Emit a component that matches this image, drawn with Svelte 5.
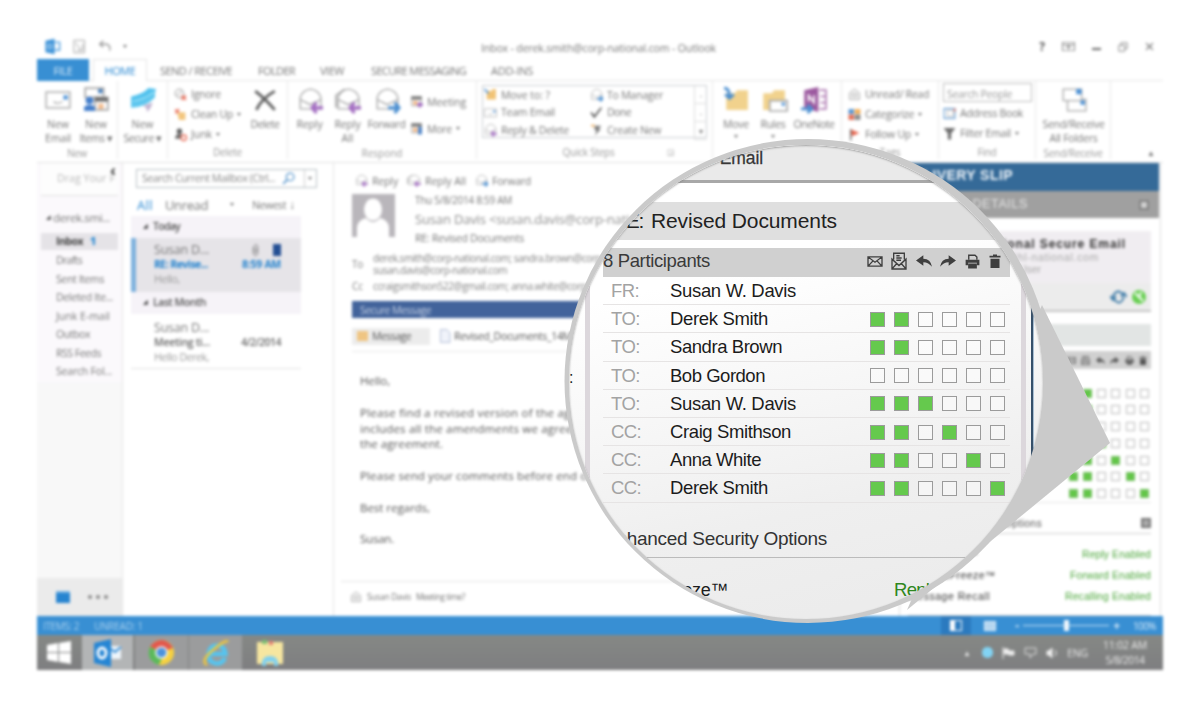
<script>
  const tabs = [
    ['SEND / RECEIVE', 72, 14],
    ['FOLDER', 37, 26],
    ['VIEW', 24, 25],
    ['SECURE MESSAGING', 95, 27],
    ['ADD-INS', 42, 25]
  ];
  const folders = [
    ['Drafts', 26], ['Sent Items', 48], ['Deleted Ite...', 57], ['Junk E-mail', 54],
    ['Outbox', 34], ['RSS Feeds', 45], ['Search Fol...', 56]
  ];
  const body = [
    ['Hello,', 30], ['', 0],
    ['Please find a revised version of the agreement', 258],
    ['includes all the amendments we agreed on', 237],
    ['the agreement.', 83], ['', 0],
    ['Please send your comments before end of day', 254], ['', 0],
    ['Best regards,', 70], ['', 0], ['Susan.', 34]
  ];
  const people = [
    ['FR:', 28, 'Susan W. Davis', 126, null],
    ['TO:', 29, 'Derek Smith', 98, '110000'],
    ['TO:', 29, 'Sandra Brown', 112, '110000'],
    ['TO:', 29, 'Bob Gordon', 95, '000000'],
    ['TO:', 29, 'Susan W. Davis', 126, '111000'],
    ['CC:', 30, 'Craig Smithson', 121, '110100'],
    ['CC:', 30, 'Anna White', 91, '110010'],
    ['CC:', 30, 'Derek Smith', 98, '110001']
  ];
  const options = [['ReplyFreeze™', 70, 'Reply Enabled', 69], ['ForwardFreeze™', 88, 'Forward Enabled', 81], ['Message Recall', 82, 'Recalling Enabled', 86]];

  // Spreads the letters of a label so that it takes up the given width.
  function fit(node, width) {
    if (!width) return;
    const natural = node.getBoundingClientRect().width;
    const n = node.textContent.length;
    node.style.letterSpacing = (width - natural) / n + 'px';
  }
</script>

{#snippet t(text, width, size = 10.5, cls = '')}
  <span class="t {cls}" style="font-size:{size}px" use:fit={width}>{text}</span>
{/snippet}

{#snippet icon(name, w = 14, h = w)}
  <svg class="icon" width={w} height={h} viewBox="0 0 24 24" preserveAspectRatio="none" fill="none" stroke="#777" stroke-width="1.6">
    {#if name === 'mail'}
      <path d="M1 5h22v15H1zM8 14c2 2 5 2 8 0" stroke="#aaa" /><path d="M17 8h4v4h-4z" fill="#2f7fd0" stroke="none" />
    {:else if name === 'items'}
      <path d="M2 1h17v9H2z" stroke="#999" /><path d="M14 2h4v4h-4z" fill="#2469b3" stroke="none" />
      <path d="M11 10h12v12H11z" stroke="#999" fill="#fff" /><path d="M11 10h12v4H11z" fill="#555" stroke="none" />
      <path d="M14 16h5v5h-5z" fill="#f2b27d" stroke="none" /><circle cx="6" cy="13" r="3.6" fill="#2469c4" stroke="none" /><path d="M1 23v-4q5-4 10 0v4z" fill="#2469c4" stroke="none" />
    {:else if name === 'secure'}
      <path d="M1 9Q12 7 17 1l7 1q-1 8-10 11T1 20z" fill="#33b7ea" stroke="none" /><path d="M2 14q13-2 20-9" stroke="#9ee4fb" /><path d="M1 14q10 0 22-9v5q-8 9-22 10z" fill="#41bdec" stroke="none" /><path d="M12 18l9-3-2 5-3 4-1-4z" fill="#b7a7c9" stroke="none" />
    {:else if name === 'x'}
      <path d="M3 4q9 7 18 18M21 4Q9 11 4 22" stroke="#444" stroke-width="2.6" />
    {:else if name === 'env' || name === 'envall' || name === 'fwd'}
      {#if name === 'envall'}<path d="M1 20V8l8-6" stroke="#999" />{/if}
      <path d="M3 21V10q2-7 9.500-8Q20 3 22 10v11H3zM3 12l9 5 10-5" stroke="#999" stroke-width="1.3" />
      {#if name === 'fwd'}<path d="M13 20h10M19 15l4 5-4 5" stroke="#2c7cc9" stroke-width="3" />{:else}<path d="M14 20h10M18 15l-4 5 4 5" stroke="#9454b8" stroke-width="3" />{/if}
    {:else if name === 'ignore'}
      <circle cx="10" cy="10" r="8" /><path d="M5 14L15 5" /><path d="M14 14l8 8m0-8l-8 8" stroke="#e5533a" stroke-width="3" />
    {:else if name === 'clean'}
      <path d="M6 8h15v14H9z" fill="#f2bd67" stroke="none" /><path d="M2 3l7 5M9 2L3 10" stroke="#e5533a" stroke-width="3" />
    {:else if name === 'junk'}
      <circle cx="10" cy="6" r="5" fill="#444" stroke="none" /><path d="M2 20q0-9 8-9t8 9z" fill="#555" stroke="none" /><circle cx="18" cy="18" r="5" fill="#fff" stroke="#e5533a" stroke-width="2.5" />
    {:else if name === 'meeting' || name === 'more'}
      <path d="M3 3h18v17H3z" stroke="#888" /><path d="M3 3h18v5H3z" fill="#666" /><path d="M6 11h8v7H6z" fill="#f0a86c" stroke="none" />
      {#if name === 'more'}<path d="M15 9h7v14h-7z" fill="#2f6fbf" stroke="none" />{:else}<path d="M13 18h11M18 13v10" stroke="#8d47b5" stroke-width="3.5" />{/if}
    {:else if name === 'folder' || name === 'rules'}
      <path d="M3 6h8l2-3h10v19H3z" fill="#efcb7a" stroke="none" />
      {#if name === 'folder'}<path d="M1 1q5 0 5 8M2 7l4 4 4-4" stroke="#2c7cc9" stroke-width="2.6" />{:else}<path d="M9 13h16v10H9z" fill="#fff" stroke="#999" /><path d="M20 15h3v3h-3z" fill="#2f7fd0" stroke="none" />{/if}
    {:else if name === 'onenote'}
      <path d="M3 3l13-3v24L3 20z" fill="#8b3d8f" stroke="none" /><path d="M17 3h6v18h-6M23 9h-5M23 15h-5" stroke="#a467a8" /><path d="M7 14V8l5 7V8" stroke="#fff" /><path d="M0 21h9M6 17l4 4-4 4" stroke="#2c7cc9" stroke-width="2.6" />
    {:else if name === 'movefolder'}
      <path d="M5 7l5-3 3 3 3-5h6v19H5z" fill="#efb95e" stroke="none" /><path d="M1 2l7 8" stroke="#2c7cc9" stroke-width="3" />
    {:else if name === 'check'}
      <path d="M2 12l6 8L21 3" stroke="#333" stroke-width="3" />
    {:else if name === 'bolt'}
      <path d="M9 5h12l-5 6h4L9 23l3-10H8z" fill="#666" stroke="none" /><path d="M2 3h7v4H2z" fill="#f0b060" stroke="none" />
    {:else if name === 'unread'}
      <path d="M3 21V9l9-7 9 7v12zM8 10h8v6H8z" stroke="#888" />
    {:else if name === 'cat'}
      <path d="M1 2h10v9H1z" fill="#3a83cc" stroke="none" /><path d="M12 2h11v9H12z" fill="#f0a23d" stroke="none" /><path d="M1 12h10v10H1z" fill="#e0583c" stroke="none" /><path d="M12 12h11v10H12z" fill="#777" stroke="none" />
    {:else if name === 'flag'}
      <path d="M4 2l17 7-14 6z" fill="#e5492f" stroke="none" /><path d="M5 2v21" stroke="#666" stroke-width="3" />
    {:else if name === 'book'}
      <path d="M2 3h20v18H2z" stroke="#4788c8" stroke-width="2" /><path d="M8 6h11v11H8z" stroke="#aaa" /><path d="M20 3h3v5h-3z" fill="#e5533a" stroke="none" />
    {:else if name === 'filter'}
      <path d="M1 2h22l-8 10v11H9V12z" fill="#555" stroke="none" />
    {:else if name === 'sendall'}
      <path d="M2 2h17v11H2zM6 13v10h17V12h-4" stroke="#999" stroke-width="1.2" /><path d="M14 2h5v5h-5zM18 13h4v4h-4z" fill="#2f7fd0" stroke="none" />
    {:else if name === 'olapp'}
      <path d="M2 4l13-3v22L2 20z" fill="#1f82d2" stroke="none" /><path d="M15 6h7v11h-7" stroke="#4d9ddd" stroke-width="2.4" /><circle cx="8" cy="12" r="3" stroke="#9fccf0" />
    {:else if name === 'send'}
      <path d="M3 2h17v20H3zM6 6l8 12M8 18h9V8" stroke="#999" />
    {:else if name === 'undo'}
      <path d="M9 3L3 9l6 5M3 9h12q7 2 5 11" stroke="#888" stroke-width="2.4" />
    {:else if name === 'search'}
      <circle cx="15" cy="9" r="7" stroke="#3f86c4" stroke-width="2.4" /><path d="M10 14l-8 8" stroke="#3f86c4" stroke-width="3" />
    {:else if name === 'clip'}
      <path d="M7 7v11q5 8 10 0V6q-4-7-8 0v10q3 4 5 0V8" stroke="#666" />
    {:else if name === 'doc'}
      <path d="M3 1h13l6 6v16H3z" stroke="#9ba9c9" fill="#eef2fa" />
    {:else if name === 'max'}
      <path d="M2 8h14v14H2zM7 7V2h15v14h-5" stroke-width="2.4" />
    {:else if name === 'ribbonbox'}
      <path d="M1 3h22v18H1zM1 8h22M12 19v-8M8 14l4-4 4 4" stroke-width="2" />
    {:else if name === 'close'}
      <path d="M3 3l18 18M21 3L3 21" stroke="#555" stroke-width="3.4" />
    {:else if name === 'envelope'}
      <path d="M1.5 4.5h21v15h-21zM2 5l10 8L22 5M2 19l7-8M22 19l-7-8" stroke="#3f3f3f" stroke-width="2" />
    {:else if name === 'letter'}
      <path d="M4 10V1.5h16V10M1.5 9.500v13h21v-13L12 18zM2 22l7-7M22 22l-7-7M8 5h5M8 8h8M8 11h7" stroke="#3f3f3f" stroke-width="2" />
    {:else if name === 'back'}
      <path d="M0 11L11 2v6Q22 8 24 22 19 14 11 14v6z" fill="#3f3f3f" stroke="none" />
    {:else if name === 'ahead'}
      <path d="M24 11L13 2v6Q2 8 0 22 5 14 13 14v6z" fill="#3f3f3f" stroke="none" />
    {:else if name === 'print'}
      <path d="M6 9V2h10l3 3v4" stroke="#3f3f3f" stroke-width="2.2" /><path d="M1 9h22v9h-4v-4H5v4H1z" fill="#3f3f3f" stroke="none" /><path d="M5 15h14v8H5z" fill="#3f3f3f" stroke="none" />
    {:else if name === 'trash'}
      <path d="M1 3h7V1h8v2h7v3H1zM3 8h18v16H3z" fill="#3f3f3f" stroke="none" />
    {/if}
  </svg>
{/snippet}

{#snippet big(name, l1, w1, l2, w2, width)}
  <div class="big" style="width:{width}px">
    {@render icon(name, 26, 25)}
    {@render t(l1, w1)}
    {#if l2 === 'caret'}<b class="caret"></b>{:else if l2}{@render t(l2, w2)}{/if}
  </div>
{/snippet}

{#snippet small(name, label, w, menu = false)}
  <div class="small">{@render icon(name, 13)}{@render t(label, w)}{#if menu}<b class="caret"></b>{/if}</div>
{/snippet}

{#snippet boxes(bits)}
  {#each bits as b}<i class:on={b === '1'}></i>{/each}
{/snippet}

<div class="page">
  <div class="window">
    <header class="title">
      <div class="qat">{@render icon('olapp', 17)}{@render icon('send', 15)}{@render icon('undo', 14)}<b class="caret"></b></div>
      {@render t('Inbox - derek.smith@corp-national.com - Outlook', 235, 10.5)}
      <div class="winbtns"><b>?</b>{@render icon('ribbonbox', 13, 11)}<em></em>{@render icon('max', 10)}{@render icon('close', 9)}</div>
    </header>
    <nav class="tabs">
      <div class="file">{@render t('FILE', 19, 11)}</div>
      <div class="home">{@render t('HOME', 31, 11)}</div>
      {#each tabs as [name, w, gap]}
        <div style="margin-left:{gap}px">{@render t(name, w, 11)}</div>
      {/each}
    </nav>
    <section class="ribbon">
      <div class="group" style="width:81px">
        <div class="tools pad2">
          {@render big('mail', 'New', 22, 'Email', 26, 38)}
          {@render big('items', 'New', 22, 'Items ▾', 33, 38)}
        </div>
        <footer>{@render t('New', 20, 10)}</footer>
      </div>
      <div class="group" style="width:50px">
        <div class="tools">{@render big('secure', 'New', 22, 'Secure ▾', 38, 49)}</div>
      </div>
      <div class="group" style="width:120px">
        <div class="tools">
          <div class="stack left6">
            {@render small('ignore', 'Ignore', 30)}
            {@render small('clean', 'Clean Up', 42, true)}
            {@render small('junk', 'Junk', 21, true)}
          </div>
          {@render big('x', 'Delete', 29, '', 0, 44)}
        </div>
        <footer>{@render t('Delete', 29, 10)}</footer>
      </div>
      <div class="group" style="width:189px">
        <div class="tools pad2">
          {@render big('env', 'Reply', 26, '', 0, 39)}
          {@render big('envall', 'Reply', 26, 'All', 12, 37)}
          {@render big('fwd', 'Forward', 38, '', 0, 41)}
          <div class="stack wide">
            {@render small('meeting', 'Meeting', 39)}
            {@render small('more', 'More', 25, true)}
          </div>
        </div>
        <footer>{@render t('Respond', 41, 10)}</footer>
      </div>
      <div class="group" style="width:236px">
        <div class="tools">
          <div class="gallery">
            <div>
              {@render small('movefolder', 'Move to: ?', 49)}
              {@render small('mail', 'Team Email', 54)}
              {@render small('env', 'Reply & Delete', 68)}
            </div>
            <div>
              {@render small('fwd', 'To Manager', 56)}
              {@render small('check', 'Done', 24)}
              {@render small('bolt', 'Create New', 54)}
            </div>
            <aside><s>-</s><s>-</s><s>▾</s></aside>
          </div>
        </div>
        <footer><span class="launch"></span>{@render t('Quick Steps', 52, 10)}<span class="launch">◲</span></footer>
      </div>
      <div class="group" style="width:129px">
        <div class="tools pad4">
          {@render big('folder', 'Move', 26, 'caret', 6, 38)}
          {@render big('rules', 'Rules', 25, 'caret', 6, 36)}
          {@render big('onenote', 'OneNote', 41, '', 0, 46)}
        </div>
      </div>
      <div class="group" style="width:97px">
        <div class="tools">
          <div class="stack left6">
            {@render small('unread', 'Unread/ Read', 64)}
            {@render small('cat', 'Categorize', 49, true)}
            {@render small('flag', 'Follow Up', 46, true)}
          </div>
        </div>
        <footer>{@render t('Tags', 21, 10)}</footer>
      </div>
      <div class="group" style="width:97px">
        <div class="tools">
          <div class="find">
            <div class="people">{@render t('Search People', 65, 10.5)}</div>
            {@render small('book', 'Address Book', 63)}
            {@render small('filter', 'Filter Email', 51, true)}
          </div>
        </div>
        <footer>{@render t('Find', 19, 10)}</footer>
      </div>
      <div class="group" style="width:75px">
        <div class="tools">{@render big('sendall', 'Send/Receive', 62, 'All Folders', 48, 75)}</div>
        <footer>{@render t('Send/Receive', 59, 10)}</footer>
      </div>
      <div class="collapse">▲</div>
    </section>

    <main>
      <aside class="nav">
        <div class="drag">{@render t('Drag Your F', 58, 10.5)}<b>‹</b></div>
        <div class="account"><u>◢</u>{@render t('derek.smi...', 57, 11.5)}</div>
        <div class="folder inbox">{@render t('Inbox', 27, 10.5)}<b>1</b></div>
        {#each folders as [name, w]}
          <div class="folder">{@render t(name, w, 10.5)}</div>
        {/each}
        <div class="filler"></div>
        <div class="modes"><span class="mailmode"></span><i></i><i></i><i></i></div>
      </aside>

      <section class="list">
        <div class="searchrow"><div class="searchbox">{@render t('Search Current Mailbox (Ctrl...', 133, 10.5)}{@render icon('search', 13)}</div><div class="drop"><b class="caret"></b></div></div>
        <div class="scope"><strong>{@render t('All', 16, 13)}</strong>{@render t('Unread', 43, 13)}<b class="caret"></b>{@render t('Newest', 34, 10.5)}<em>↓</em></div>
        <div class="band"><u>◢</u>{@render t('Today', 27, 10.5)}</div>
        <div class="mail current">
          <div class="from">{@render t('Susan D...', 55, 12.5)}<span>{@render icon('clip', 11, 14)}<q></q></span></div>
          <div class="subj">{@render t('RE: Revise...', 54, 10.5)}{@render t('8:59 AM', 39, 10.5)}</div>
          <div class="pre">{@render t('Hello,', 26, 10.5)}</div>
        </div>
        <div class="band"><u>◢</u>{@render t('Last Month', 53, 10.5)}</div>
        <div class="mail">
          <div class="from">{@render t('Susan D...', 55, 12.5)}</div>
          <div class="subj">{@render t('Meeting ti...', 56, 10.5)}{@render t('4/2/2014', 40, 10.5)}</div>
          <div class="pre">{@render t('Hello Derek,', 55, 10.5)}</div>
        </div>
      </section>

      <section class="reading">
        <div class="actions">
          {@render icon('env', 13, 12)}{@render t('Reply', 26)}
          {@render icon('envall', 14, 12)}{@render t('Reply All', 41)}
          {@render icon('fwd', 13, 12)}{@render t('Forward', 39)}
        </div>
        <div class="head">
          <svg width="43" height="43" viewBox="0 0 43 43"><path fill="#b9b6bb" d="M0 0h43v43H0z" /><ellipse cx="21" cy="15.500" rx="9" ry="11" fill="#fff" /><path fill="#fff" d="M5 43V33q1-7 9-9 7 8 14 0 8 2 9 9v10z" /></svg>
          <div>
            {@render t('Thu 5/8/2014 8:59 AM', 97, 10)}
            {@render t('Susan Davis <susan.davis@corp-national.com>', 276, 13)}
            {@render t('RE: Revised Documents', 109, 10.5)}
          </div>
        </div>
        <div class="addr">{@render t('To', 11, 10)}<div>{@render t('derek.smith@corp-national.com; sandra.brown@corp-national.com', 286, 10)}{@render t('susan.davis@corp-national.com', 134, 10)}</div></div>
        <div class="addr cc">{@render t('Cc', 11, 10)}<div>{@render t('ccraigsmithson522@gmail.com; anna.white@corp-national.com', 272, 10)}</div></div>
        <div class="secure">{@render t('Secure Message', 71, 10.5)}</div>
        <div class="attach"><div class="msg"><span></span>{@render t('Message', 39, 10.5)}</div>{@render icon('doc', 12, 14)}{@render t('Revised_Documents_14MB.pdf', 142, 10.5)}</div>
        <div class="body">
          {#each body as [line, w]}<p>{@render t(line, w, 11.5)}</p>{/each}
        </div>
        <div class="peek">{@render icon('unread', 12)}{@render t('Susan Davis', 44, 8.5)}{@render t('Meeting time?', 49, 8.5)}</div>
      </section>

      <aside class="slip">
        <h2>{@render t('DELIVERY SLIP', 110, 14)}</h2>
        <h3>{@render t('DELIVERY DETAILS', 126, 12.5)}<span></span></h3>
        <div class="card">
          {@render t('Corp National Secure Email', 181, 12)}
          {@render t('derek.smith@hl-national.com', 154, 10.5)}
          {@render t('Standard Email User', 96, 10.5)}
        </div>
        <div class="cardbar">
          <svg width="17" height="16" viewBox="0 0 17 16" fill="none" stroke="#3d7aa6" stroke-width="1.800"><path d="M3 9V7q5-9 11 0M14 8q-4 10-10 2M0 7l3 4 3-4M11 8l3-4 3 4" /></svg>
          <svg width="14" height="16" viewBox="0 0 14 16"><circle cx="7" cy="8" r="7" fill="#68cf52" /><path d="M3 4l8 8M9 3l-2 6" stroke="#fff" stroke-width="1.800" /></svg>
        </div>
        <div class="subject"></div>
        <div class="parts">{@render icon('envelope', 9)}{@render icon('letter', 9)}{@render icon('back', 9)}{@render icon('ahead', 9)}{@render icon('print', 9)}{@render icon('trash', 8, 9)}</div>
        <div class="minis">
          {#each people as p}<div>{#if p[4]}{@render boxes([...p[4]])}{/if}</div>{/each}
        </div>
        <div class="enh">{@render t('Enhanced Security Options', 134, 10.5)}<span></span></div>
        <div class="opts">
          {#each options as [a, wa, b, wb]}<div>{@render t(a, wa, 10.5)}{@render t(b, wb, 10.5)}</div>{/each}
        </div>
      </aside>
    </main>

    <div class="status">
      {@render t('ITEMS: 2', 36, 10)}{@render t('UNREAD: 1', 49, 10)}
      <div class="zoom">
        <span class="view"><i></i></span><span class="view2"></span>
        <b>-</b><span class="track"><i></i></span><b>+</b>{@render t('100%', 23, 10)}
      </div>
    </div>
    <div class="taskbar">
      <div class="start"><svg width="25" height="24" viewBox="0 0 25 24" fill="#fff"><path d="M0 4l11-2v9H0zM12 2l12-2v11H12zM0 12h11v9L0 19zM12 12h12v11l-12-2z" /></svg></div>
      <div class="app ol"><svg width="28" height="28" viewBox="0 0 28 28"><path d="M14 7h13v13H14z" fill="#eef5fb" /><path d="M14 8l7 5 6-5" fill="none" stroke="#3b90d6" stroke-width="2" /><path d="M0 4l17-4v28L0 24z" fill="#2585d4" /><ellipse cx="8" cy="14" rx="4" ry="5" fill="none" stroke="#fff" stroke-width="2.800" /></svg></div>
      <div class="app"><svg width="27" height="27" viewBox="0 0 28 28"><circle cx="14" cy="14" r="13" fill="#f6d140" /><path d="M14 14L2 8Q7 1 14 1t12 8z" fill="#e2574c" /><path d="M2 8q-5 14 9 19l6-11z" fill="#5bb95b" /><circle cx="14" cy="14" r="6.500" fill="#fff" /><circle cx="14" cy="14" r="5" fill="#4a92dd" /></svg></div>
      <div class="app"><svg width="28" height="28" viewBox="0 0 28 28" fill="none"><path d="M23 19q-3 6-9 5.500-8-1.500-7.500-9.500Q8 6.500 15 6.500q8 .5 8.500 8.500H8" stroke="#55c4ef" stroke-width="4.600" /><path d="M5 26q-7-4 6-15T26 3" stroke="#edc63e" stroke-width="2.600" /></svg></div>
      <div class="app plain"><svg width="28" height="26" viewBox="0 0 28 26"><path d="M1 2h26v22H1z" fill="#f6e6a0" /><path d="M6 0h5v4H6z" fill="#7cbf72" /><path d="M13 1h4v4h-4z" fill="#e58173" /><path d="M6 24q0-8 8-8t8 8v2h-4v-4h-8v4H6z" fill="#7fd0f0" /></svg></div>
      <div class="tray">
        <b>▴</b><span class="bubble"></span>
        <svg width="13" height="12" viewBox="0 0 13 12"><path d="M1 0v12M2 2h4l1 2h5v4H7L6 7H2z" fill="#eee" stroke="#eee" /></svg>
        <svg width="13" height="13" viewBox="0 0 13 13" fill="none" stroke="#ddd"><path d="M1 2h11v6H9l-3 4v-4H1z" /></svg>
        <svg width="12" height="12" viewBox="0 0 12 12" stroke="#eee"><path d="M1 4h2l3-3v10L3 8H1z" fill="#eee" /><path d="M9 3q3 3 0 6" fill="none" /></svg>
        {@render t('ENG', 21, 10.5)}
        <div class="clock">{@render t('11:02 AM', 44, 10.5)}{@render t('5/8/2014', 39, 10.5)}</div>
      </div>
    </div>
  </div>

  <svg class="rim" width="1200" height="707" viewBox="0 0 1200 707">
    <ellipse cx="808" cy="381" rx="243.500" ry="242" fill="#cacaca" />
    <path d="M1042 305L1110 443 907 610z" fill="#cacaca" />
  </svg>
  <div class="lens">
    <div class="brand">{@render t('National Secure Email', 171, 17.5)}</div>
    <div class="topic">{@render t('RE:', 31, 21)}{@render t('Revised Documents', 186, 21)}</div>
    <div class="sheet">
      <div class="bar">
        {@render t('8 Participants', 107, 18.5)}
        <div class="tools6">
          {@render icon('envelope', 16, 15)}{@render icon('letter', 16, 18)}{@render icon('back', 16, 14)}{@render icon('ahead', 16, 14)}{@render icon('print', 15, 15)}{@render icon('trash', 12, 14)}
        </div>
      </div>
      {#each people as [role, rw, name, nw, bits]}
        <div class="person">
          <span class="role">{@render t(role, rw, 18.5)}</span>
          <span class="name">{@render t(name, nw, 18.5)}</span>
          <span class="checks">{#if bits}{@render boxes([...bits])}{/if}</span>
        </div>
      {/each}
      <div class="security">{@render t('Enhanced Security Options', 223, 19)}</div>
      <div class="freeze">{@render t('ReplyFreeze™', 116, 18)}{@render t('Reply Enabled', 111, 18.5)}</div>
    </div>
    <span class="edge left"></span><span class="edge right"></span><span class="edge blue"></span><span class="colon">:</span>
    <span class="gloss"></span>
  </div>
</div>

<style>
  :global(body) { margin: 0; background: #fff; }
  .page { position: relative; box-sizing: border-box; width: 1200px; height: 707px; padding: 34px 37px 37px; overflow: hidden; background: #fff; font-family: "Open Sans", "Noto Sans", sans-serif; color: #777; }
  .page :global(*) { box-sizing: border-box; }
  .t { display: inline-block; white-space: pre; flex: none; justify-self: start; }
  .icon { display: block; flex: none; overflow: visible; }
  i, em, u, s, q { font-style: normal; text-decoration: none; }
  q::before, q::after { content: none; }
  h2, h3, p { margin: 0; }

  .window { width: 1126px; height: 636px; display: flex; flex-direction: column; filter: blur(1.75px); background: #fff; }
  .window .icon { opacity: .85; }
  .title { height: 25px; display: flex; align-items: center; padding: 2px 9px 0 7px; line-height: 14px; }
  .title > .t { margin-top: 1px; }
  .qat { width: 437px; display: flex; align-items: center; gap: 11px; margin-top: -3px; }
  .caret { display: block; width: 0; height: 0; border: 2.500px solid transparent; border-top: 3px solid #777; border-bottom: 0; flex: none; }
  .winbtns { display: flex; align-items: center; gap: 17px; font-size: 12px; margin-left: auto; color: #555; margin-top: -2px; }
  .winbtns em { width: 9px; height: 2px; background: #666; margin-top: 4px; }

  .tabs { height: 22px; display: flex; align-items: center; border-bottom: 1px solid #e6e6e6; line-height: 20px; flex: none; }
  .file { width: 52px; height: 22px; background: #388fd3; color: #d8ebf9; text-align: center; }
  .home { width: 54px; height: 22px; margin: 0 -1px 0 4px; border: 1px solid #e4e4e4; border-bottom: 0; background: #fff; color: #2b89d2; text-align: center; line-height: 18px; }

  .ribbon { height: 82px; display: flex; border-bottom: 1px solid #e1e1e1; flex: none; }
  .group { height: 78px; border-right: 1px solid #e8e8e8; display: flex; flex-direction: column; flex: none; }
  .group footer { display: flex; justify-content: center; line-height: 14px; color: #999; margin-top: 1px; }
  .tools { height: 67px; display: flex; }
  .pad2 { padding-left: 2px; }
  .pad4 { padding-left: 4px; }
  .big { display: flex; flex-direction: column; align-items: center; padding-top: 6px; line-height: 14px; flex: none; }
  .big .icon { margin-bottom: 5px; }
  .big .caret { margin-top: 4px; }
  .small { display: flex; align-items: center; gap: 4px; height: 20px; }
  .stack { width: 69px; padding-top: 3px; }
  .left6 { margin-left: 6px; }
  .stack.wide { padding: 7px 0 0 3px; }
  .wide .small { height: 27px; }
  .gallery { width: 225px; height: 53px; margin: 4px 0 0 5px; border: 1px solid #c9ccd0; display: grid; grid-template-columns: 106px 104px 13px; padding-left: 1px; }
  .gallery .small { height: 17.5px; }
  .gallery aside { border-left: 1px solid #ddd; display: grid; text-align: center; font-size: 8px; line-height: 17px; }
  .gallery s { border-bottom: 1px solid #ddd; }
  .launch { width: 60px; text-align: right; font-size: 8px; }
  .launch:first-child { width: 48px; }
  .find { padding: 2px 0 0 4px; }
  .people { width: 89px; height: 19px; border: 1px solid #bbb; padding-left: 3px; line-height: 16px; margin-bottom: 1px; color: #999; }
  .collapse { flex: 1; text-align: right; padding: 66px 8px 0 0; font-size: 8px; }

  main { height: 453px; display: flex; flex: none; }
  .nav { width: 86px; border-right: 1px solid #e5e5e5; background: #fbf9fc; display: flex; flex-direction: column; flex: none; }
  .drag { height: 33px; margin: 0 4px; padding: 8px 0 0 16px; display: flex; border-bottom: 1px solid #e0e0e0; color: #b9b9b9; line-height: 14px; background: #fdfdfd; }
  .drag b { margin: -8px 0 0 -5px; color: #444; }
  .account { display: flex; height: 37px; align-items: center; padding: 5px 0 0 9px; gap: 2px; }
  u { font-size: 6px; color: #444; }
  .folder { height: 18.55px; line-height: 16px; padding-left: 19px; }
  .inbox { background: #e5e3e7; margin: 0 4px; padding-left: 15px; height: 17px; display: flex; gap: 7px; font-size: 10.5px; font-weight: 700; color: #444; }
  .inbox b { color: #2b89d2; }
  .filler { flex: 1; margin-top: 2px; background: #f8f8f8; }
  .modes { height: 38px; background: #ebebeb; display: flex; align-items: center; gap: 4px; padding-left: 19px; }
  .mailmode { width: 14px; height: 12px; background: #2784d0; border-top: 2px solid #75b2e2; margin-right: 14px; }
  .modes i { width: 4px; height: 4px; border-radius: 2px; background: #888; }

  .list { width: 211px; border-right: 1px solid #e4e4e4; padding: 6px 0 0 8px; flex: none; }
  .searchrow { display: flex; width: 181px; height: 19px; margin-left: 5px; border: 1px solid #b7bfc3; line-height: 15px; color: #888; }
  .searchbox { width: 168px; display: flex; align-items: center; gap: 7px; padding-left: 5px; border-right: 1px solid #ccc; }
  .drop { padding: 7px 0 0 3px; }
  .scope { height: 28px; display: flex; align-items: center; padding: 5px 0 0 6px; line-height: 18px; }
  .scope strong { color: #2b89d2; margin-right: 12px; font-weight: 400; }
  .scope .caret { margin: 0 18px 0 22px; }
  .scope em { margin-left: 3px; font-size: 12px; }
  .band { width: 170px; height: 22px; background: #f6f3f8; display: flex; align-items: center; gap: 5px; padding: 0 0 2px 12px; color: #555; font-weight: 600; }
  .mail { width: 170px; height: 55px; padding: 4px 20px 0 23px; border-bottom: 1px solid #e1e1e1; }
  .mail.current { background: #e6e4e8; border-left: 5px solid #7eb1dd; border-bottom: 0; height: 54px; padding-left: 18px; }
  .mail:last-child { padding-top: 6px; height: 55px; }
  .from, .subj { display: flex; justify-content: space-between; line-height: 15px; }
  .from span:not(.t) { display: flex; gap: 12px; align-items: center; }
  .from q { width: 8px; height: 12px; background: #244f94; }
  .subj { line-height: 14px; font-weight: 600; color: #666; }
  .current .subj { color: #2382cd; font-weight: 700; }
  .pre { line-height: 13px; color: #999; }

  .reading { width: 567px; padding: 11px 0 0 18px; overflow: hidden; flex: none; }
  .actions { height: 20px; padding-left: 3px; display: flex; gap: 4px; line-height: 14px; }
  .actions .t { margin-right: 5px; }
  .head { display: flex; gap: 20px; height: 57px; }
  .head div { display: flex; flex-direction: column; margin-top: -1px; }
  .head .t { line-height: 14px; align-self: flex-start; }
  .head .t:nth-child(2) { line-height: 24px; color: #8c8c8c; }
  .addr { display: grid; grid-template-columns: 21px 500px; align-items: center; height: 23px; line-height: 11.5px; margin-top: 2px; color: #808080; }
  .addr div { display: flex; flex-direction: column; align-items: flex-start; }
  .addr.cc { height: 14px; margin-top: 4px; }
  .secure { height: 17px; margin-top: 7px; background: #42639b; color: #c7d2e5; line-height: 15px; padding-left: 8px; }
  .attach { height: 31px; display: flex; align-items: center; border-bottom: 1px solid #e8e8e8; margin-top: 3px; gap: 3px; color: #555; }
  .msg { width: 78px; height: 17px; background: #ececec; display: flex; align-items: center; gap: 4px; padding-left: 5px; margin-right: 6px; }
  .msg span:first-child { width: 11px; height: 10px; background: #efc582; }
  .body { padding: 20px 0 0 8px; height: 229px; color: #555; }
  .body p { height: 15.85px; line-height: 15px; }
  .peek { display: flex; align-items: center; gap: 5px; height: 30px; border-top: 1px solid #e3e3e3; margin-left: -11px; padding-left: 9px; }

  .slip { width: 262px; border-left: 1px solid #ddd; border-right: 1px solid #ddd; padding-right: 1px; font-family: "Liberation Sans", Arial, sans-serif; flex: none; margin-left: -2px; }
  .slip h2 { height: 28px; background: #356a98; color: #eef4f9; line-height: 20px; text-align: left; padding-left: 3px; font-weight: 700; display: flex; padding-top: 2px; }
  .slip h3 { height: 27px; background: #a0a0a0; color: #e6e6e6; line-height: 27px; padding: 0 10px 0 2px; display: flex; justify-content: space-between; align-items: center; font-weight: 400; }
  .slip h3 span:last-child { width: 10px; height: 10px; border: 2px solid #828282; background: #d0d0d0; }
  .card { margin: 13px 8px 0; height: 52px; background: #f0edf1; display: flex; flex-direction: column; align-items: flex-start; padding: 7px 0 0 37px; line-height: 12.5px; color: #aaa; }
  .card .t:first-child { color: #333; font-weight: 700; }
  .cardbar { margin: 0 8px; height: 29px; background: #ececec; border-bottom: 2px solid #c4c4c4; display: flex; justify-content: flex-end; gap: 5px; align-items: center; padding-right: 5px; }
  .subject { margin: 12px 8px 0; height: 22px; background: #e2e5e4; }
  .parts { margin: 5px 8px 0; height: 18px; background: #d0d0d0; display: flex; justify-content: flex-end; align-items: center; gap: 5.5px; padding-right: 4px; }
  .minis { margin: 0 8px; border-bottom: 1px solid #e5e5e5; margin-top: -1px; }
  .minis div { height: 16.75px; display: flex; justify-content: flex-end; align-items: center; gap: 5.300px; padding-right: 2px; }
  .minis i { width: 9px; height: 9px; border: 1px solid #b8b8b8; }
  .minis .on { background: #62c648; border-color: #7dbd6c; }
  .enh { margin: 0 8px; height: 31px; padding-top: 9px; border-bottom: 1px solid #ccc; display: flex; justify-content: space-between; align-items: center; color: #555; }
  .enh span:last-child { width: 10px; height: 10px; border: 2px solid #777; background: #aaa; }
  .opts { margin: 9px 8px 0; border-bottom: 1px solid #ccc; height: 73px; }
  .opts div { height: 21.2px; display: flex; justify-content: space-between; align-items: center; color: #333; }
  .opts .t:last-child { color: #4ba63a; }

  .status { height: 19px; background: #388fd3; color: #a9d0ee; display: flex; align-items: center; padding: 0 7px 0 6px; gap: 15px; flex: none; }
  .zoom { margin-left: auto; display: flex; align-items: center; color: #d6e9f8; }
  .view { width: 30px; height: 19px; background: #2b7abf; display: flex; align-items: center; justify-content: center; }
  .view i { width: 12px; height: 11px; border: 1px solid #fff; border-left-width: 5px; }
  .view2 { width: 12px; height: 10px; background: #b4d6f0; margin: 0 19px 0 13px; border: 1px solid #e4f1fa; }
  .zoom b { font-size: 12px; line-height: 12px; }
  .track { width: 86px; height: 1px; background: #c9e2f5; margin: 0 4px; display: flex; align-items: center; justify-content: center; }
  .track i { width: 5px; height: 11px; background: #f2f8fd; }
  .zoom .t { margin-left: 13px; }
  .taskbar { height: 35px; display: flex; background: linear-gradient(#858885, #7e7e80); flex: none; }
  .start { width: 45px; display: grid; place-items: center; }
  .app { width: 53px; margin-right: 1.500px; background: #9b9c9d; display: grid; place-items: center; }
  .app.ol { width: 51px; background: #b3b5b6; }
  .app.plain { background: none; }
  .tray { margin-left: auto; display: flex; align-items: center; color: #e9e9e9; gap: 9px; padding-right: 16px; }
  .tray > b { font-size: 8px; }
  .bubble { width: 11px; height: 11px; border-radius: 5px; background: #82d4f4; margin-left: 4px; }
  .clock { display: flex; flex-direction: column; align-items: center; line-height: 15px; margin-left: 6px; }

  .rim { position: absolute; left: 0; top: 0; }
  .lens { position: absolute; left: 569px; top: 145px; width: 474px; height: 474px; border-radius: 50%; overflow: hidden; font-family: "Liberation Sans", Arial, sans-serif; color: #1c1c1c; background: linear-gradient(167deg, #fff 28%, #f8f8f8 48%, #efefef 72%, #ececec 90%); }
  .brand { height: 38px; background: #eaeaea; border-bottom: 3px solid #a8a8a8; padding: 3px 0 0 23px; line-height: 21px; color: #333; -webkit-text-stroke: .3px #444; }
  .topic { height: 38px; margin-top: 19px; background: #dfdfdf; padding-left: 43px; display: flex; gap: 8px; align-items: center; color: #222; }
  .sheet { margin: 8px 33px 0 34px; }
  .bar { height: 29px; background: #d0d0d0; color: #3a3a3a; display: flex; justify-content: space-between; align-items: center; padding: 0 9px 3px 0; }
  .tools6 { display: flex; align-items: center; gap: 8.500px; }
  .tools6 .icon:last-child { margin-left: 1px; }
  .person { height: 28.2px; border-bottom: 1px solid #e6e4e4; display: grid; grid-template-columns: 59px 200px 137px; padding: 1px 0 0 8px; align-items: center; }
  .role { color: #a3a3a3; }
  .checks { display: flex; gap: 9.100px; }
  .checks i { width: 15px; height: 15px; flex: none; border: 1.500px solid #9b9b9b; background: #ffffff66; }
  .checks i.on { background: #65c94d; }
  .security { height: 55px; padding: 25px 0 0 35px; line-height: 21px; border-bottom: 1px solid #bbb; margin: 0 -34px; color: #333; }
  .freeze { display: flex; justify-content: space-between; padding: 21px 5px 0 9px; line-height: 22px; }
  .freeze .t:last-child { color: #2f8720; }
  .edge { position: absolute; width: 5px; top: 103px; bottom: 0; background: #dcd7dc; }
  .left { left: 16px; bottom: 120px; }
  .right { left: 452px; bottom: 130px; }
  .edge.blue { left: 462px; width: 3px; background: #36506a; border-right: 1px solid #a9bfd3; }
  .colon { position: absolute; left: 0; top: 224px; font-size: 16px; }
  .gloss { position: absolute; inset: 0; border-radius: 50%; box-shadow: inset 0 1px 2px #7779; }
</style>
